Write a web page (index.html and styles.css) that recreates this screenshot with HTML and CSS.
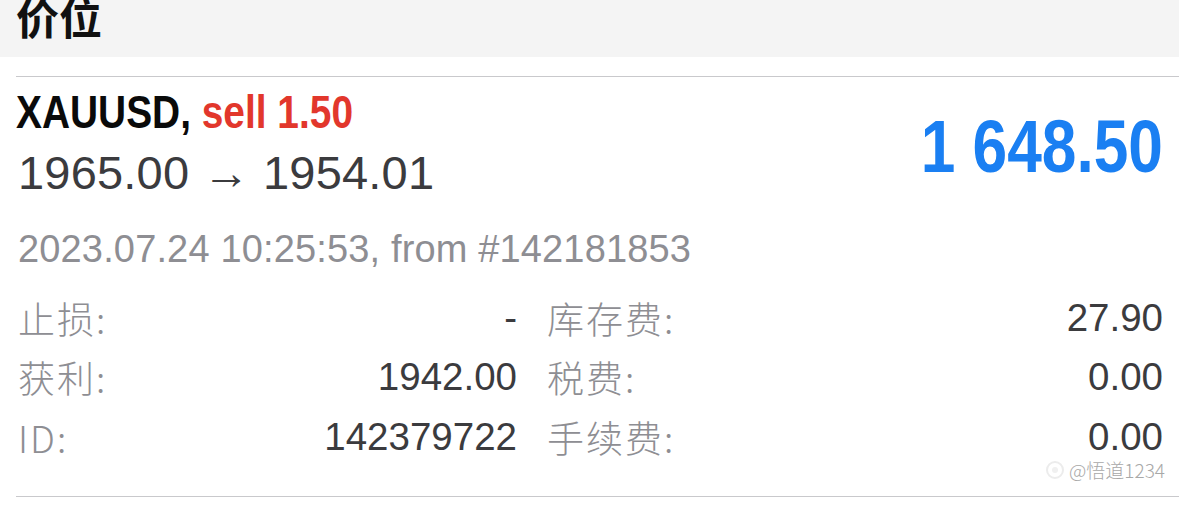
FILE: index.html
```html
<!DOCTYPE html>
<html lang="zh">
<head>
<meta charset="utf-8">
<link rel="stylesheet" href="styles.css">
</head>
<body>
<div class="header"><div class="header-title">价位</div></div>
<div class="card">
  <div class="top">
    <div class="top-left">
      <div class="symbol"><span class="sym">XAUUSD,</span> <span class="side">sell 1.50</span></div>
      <div class="prices">1965.00 → 1954.01</div>
    </div>
    <div class="profit">1 648.50</div>
  </div>
  <div class="date">2023.07.24 10:25:53, from #142181853</div>
  <div class="grid">
    <div class="cell"><span class="label">止损:</span><span class="value">-</span></div>
    <div class="cell"><span class="label">库存费:</span><span class="value">27.90</span></div>
    <div class="cell"><span class="label">获利:</span><span class="value">1942.00</span></div>
    <div class="cell"><span class="label">税费:</span><span class="value">0.00</span></div>
    <div class="cell"><span class="label">ID:</span><span class="value">142379722</span></div>
    <div class="cell"><span class="label">手续费:</span><span class="value">0.00</span></div>
  </div>
  <div class="watermark">
    <svg class="wm-icon" width="20" height="20" viewBox="0 0 20 20"><circle cx="10" cy="10" r="8" fill="none" stroke="#ececec" stroke-width="2"/><circle cx="10" cy="10" r="3" fill="#f0f0f0"/></svg>
    <span>@悟道1234</span>
  </div>
</div>
</body>
</html>
```
FILE: styles.css
```css
html, body {
  margin: 0;
  padding: 0;
  background: #ffffff;
}
body {
  font-family: "Liberation Sans", "Noto Sans CJK SC", sans-serif;
  width: 1179px;
  height: 513px;
  overflow: hidden;
}
.header {
  height: 57px;
  background: #f4f4f4;
  padding-left: 16px;
  overflow: hidden;
  margin-bottom: 19px;
}
.header-title {
  font-family: "Noto Sans CJK SC", sans-serif;
  font-weight: 700;
  font-size: 43px;
  line-height: 43px;
  margin-top: -5px;
  color: #111;
}
.card {
  margin-left: 16px;
  border-top: 1px solid #c9c9cc;
  border-bottom: 1px solid #c9c9cc;
  padding: 0 16px 0 2px;
  position: relative;
  height: 421px;
  box-sizing: border-box;
}
.top {
  display: flex;
  justify-content: space-between;
  align-items: flex-start;
}
.top-left {
  display: flex;
  flex-direction: column;
}
.symbol {
  font-weight: 700;
  font-size: 46px;
  line-height: 52px;
  margin-top: 9px;
  margin-left: -2px;
  color: #0a0a0a;
  transform: scaleX(0.845);
  transform-origin: left center;
  white-space: nowrap;
}
.side {
  color: #e2372c;
}
.prices {
  font-size: 47px;
  line-height: 54px;
  color: #3b3b3e;
  margin-top: 8px;
  letter-spacing: 0.2px;
}
.profit {
  font-weight: 700;
  font-size: 75px;
  line-height: 80px;
  color: #1a7ff2;
  margin-top: 29px;
  transform: scaleX(0.83);
  transform-origin: right center;
  white-space: nowrap;
}
.date {
  font-size: 38px;
  line-height: 44px;
  color: #8e8e93;
  margin-top: 27px;
  letter-spacing: 0.15px;
}
.grid {
  display: grid;
  grid-template-columns: 499px 1fr;
  column-gap: 30px;
  margin-top: 17px;
}
.cell {
  display: flex;
  justify-content: space-between;
  align-items: center;
  height: 59.5px;
}
.label {
  font-family: "Noto Sans CJK SC", sans-serif;
  font-weight: 300;
  font-size: 37px;
  color: #8e8e93;
  letter-spacing: 2px;
}
.value {
  font-size: 38.5px;
  color: #3b3b3e;
}
.watermark {
  position: absolute;
  right: 14px;
  bottom: 13px;
  display: flex;
  align-items: center;
  gap: 4px;
  font-family: "Noto Sans CJK SC", sans-serif;
  font-weight: 300;
  font-size: 19px;
  color: #a8a8a8;
}
```
